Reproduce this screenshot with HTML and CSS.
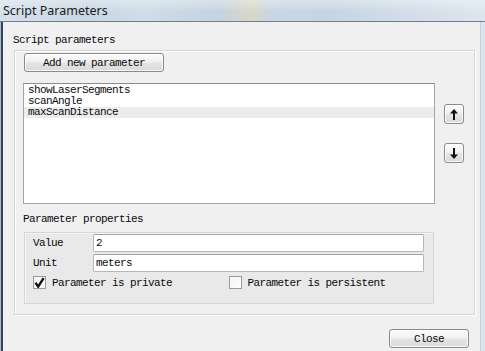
FILE: index.html
```html
<!DOCTYPE html>
<html lang="en">
<head>
    <meta charset="UTF-8">
    <title>Script Parameters</title>
    <link rel="stylesheet" href="styles.css">
</head>
<body>
    <div class="window">
        <div class="titlebar">Script Parameters</div>
        <div class="client">
            <div class="group-title">Script parameters</div>
            <div class="group">
                <button class="btn add-btn">Add new parameter</button>

                <div class="list-row">
                    <ul class="param-list">
                        <li>showLaserSegments</li>
                        <li>scanAngle</li>
                        <li class="selected">maxScanDistance</li>
                    </ul>
                    <div class="side-buttons">
                        <button class="btn icon-btn" title="Move up">
                            <svg width="8" height="11" viewBox="0 0 8 11"><polygon points="4,0 8,4.5 5,4.5 5,11 3,11 3,4.5 0,4.5" fill="#111"/></svg>
                        </button>
                        <button class="btn icon-btn" title="Move down">
                            <svg width="8" height="11" viewBox="0 0 8 11"><polygon points="4,11 8,6.5 5,6.5 5,0 3,0 3,6.5 0,6.5" fill="#111"/></svg>
                        </button>
                    </div>
                </div>

                <div class="sub-title">Parameter properties</div>
                <div class="props">
                    <div class="prop-row">
                        <label for="value">Value</label>
                        <input id="value" type="text" value="2">
                    </div>
                    <div class="prop-row">
                        <label for="unit">Unit</label>
                        <input id="unit" type="text" value="meters">
                    </div>
                    <div class="checks">
                        <div class="check-item">
                            <span class="checkbox">
                                <svg width="11" height="11" viewBox="0 0 11 11"><path d="M1.5 5.8 L4.2 9.6 L9.6 1.2" fill="none" stroke="#111" stroke-width="2.4"/></svg>
                            </span>
                            <span>Parameter is private</span>
                        </div>
                        <div class="check-item">
                            <span class="checkbox"></span>
                            <span>Parameter is persistent</span>
                        </div>
                    </div>
                </div>
            </div>

            <div class="footer">
                <button class="btn close-btn">Close</button>
            </div>
        </div>
    </div>
</body>
</html>
```

FILE: styles.css
```css
body {
    margin: 0;
    width: 485px;
    height: 351px;
    overflow: hidden;
    font-family: 'Liberation Mono', monospace;
    font-size: 11px;
    letter-spacing: -0.6px;
    color: #0a0a0a;
}
.window {
    display: flex;
    flex-direction: column;
    height: 351px;
    background: linear-gradient(90deg, #a9bcd0 0px, #a9bcd0 1px, #dce5ee 1px, #dce5ee 100%);
}
.titlebar {
    height: 21px;
    line-height: 21px;
    padding-left: 3px;
    border-bottom: 1px solid #6f7d8d;
    font-family: 'Noto Sans', sans-serif;
    font-size: 12.5px;
    letter-spacing: 0;
    color: #1a1a1a;
    background:
        linear-gradient(180deg, rgba(255,255,255,0.35), rgba(255,255,255,0) 60%),
        linear-gradient(90deg, #d6e0ea 0%, #c9d7e4 18%, #d0dce7 30%, #c3d3e1 45%, #d8d8c4 52%, #c8d6e3 56%, #c5d5e3 68%, #cfdbe7 80%, #dde6ef 100%);
}
.client {
    flex: 1;
    display: flex;
    flex-direction: column;
    margin: 0 4px 0 1px;
    border-left: 2px solid #34425a;
    border-right: 1px solid #c8cfd6;
    background-color: #f0f0f0;
}
.group-title {
    margin: 12px 0 0 10px;
    line-height: 12px;
}
.group {
    margin: 4px 5px 0 11px;
    height: 265px;
    box-sizing: border-box;
    padding: 2px 10px 0 9px;
    border: 1px solid #d5d5d5;
    box-shadow: inset 1px 1px 0 #fff, 1px 1px 0 #fff;
}
.btn {
    font-family: 'Liberation Mono', monospace;
    font-size: 11px;
    letter-spacing: -0.6px;
    color: #0a0a0a;
    border: 1px solid #8a8a8a;
    border-radius: 3px;
    background: linear-gradient(180deg, #fbfbfb 0%, #f1f1f1 45%, #e3e3e3 55%, #dadada 100%);
    box-shadow: inset 0 0 0 1px rgba(255,255,255,0.8);
    padding: 0;
    box-sizing: border-box;
    cursor: pointer;
}
.add-btn {
    display: block;
    width: 140px;
    height: 19px;
}
.list-row {
    display: flex;
    margin: 11px 0 0 -1px;
}
.param-list {
    list-style: none;
    margin: 0;
    padding: 1px 0;
    width: 412px;
    height: 121px;
    box-sizing: border-box;
    background-color: #fff;
    border: 1px solid #a4a4a4;
    border-top-color: #8c8c8c;
}
.param-list li {
    height: 11px;
    line-height: 11px;
    padding-left: 4px;
}
.param-list li.selected {
    background-color: #ececec;
}
.side-buttons {
    width: 29px;
    display: flex;
    flex-direction: column;
    align-items: flex-end;
    padding-top: 21px;
    gap: 19px;
}
.icon-btn {
    width: 20px;
    height: 20px;
    display: flex;
    align-items: center;
    justify-content: center;
}
.sub-title {
    margin: 9px 0 0 -1px;
    line-height: 12px;
}
.props {
    margin-top: 7px;
    width: 410px;
    height: 72px;
    box-sizing: border-box;
    padding: 1px 9px 0 8px;
    background-color: #e9e9e9;
    border: 1px solid #d6d6d6;
    box-shadow: inset 1px 1px 0 #f6f6f6;
    display: flex;
    flex-direction: column;
    gap: 2px;
}
.prop-row {
    display: flex;
    align-items: center;
    height: 18px;
}
.prop-row label {
    width: 60px;
}
.prop-row input {
    width: 331px;
    height: 18px;
    box-sizing: border-box;
    margin: 0;
    padding: 0 2px;
    border: 1px solid #b5b7bb;
    border-top-color: #a0a3a8;
    border-radius: 2px;
    background-color: #fff;
    font-family: 'Liberation Mono', monospace;
    font-size: 11px;
    letter-spacing: -0.6px;
    color: #0a0a0a;
}
.checks {
    display: flex;
    margin-top: 2px;
    height: 13px;
}
.check-item {
    display: flex;
    align-items: center;
    gap: 6px;
    width: 200px;
}
.checkbox {
    width: 13px;
    height: 13px;
    box-sizing: border-box;
    border: 1px solid #9a9a9a;
    background: linear-gradient(135deg, #f2f2f2, #ffffff);
    display: flex;
    align-items: center;
    justify-content: center;
}
.footer {
    display: flex;
    justify-content: flex-end;
    margin: 14px 11px 0 0;
}
.close-btn {
    width: 80px;
    height: 19px;
}
```
